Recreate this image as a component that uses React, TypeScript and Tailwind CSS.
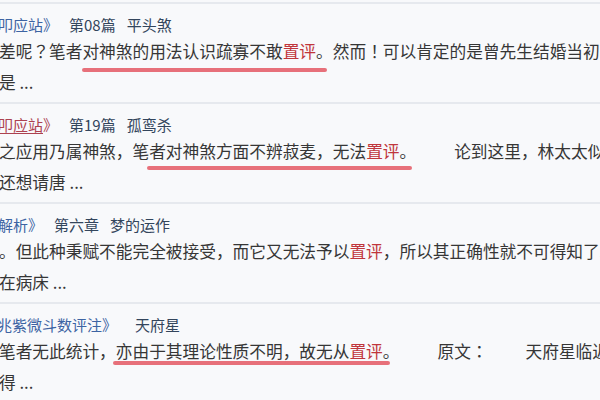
import React from 'react';

function Red({ children }: { children: React.ReactNode }) {
  return <span className="text-[#c0363c]">{children}</span>;
}

// full-width ？！： sit centred in the JP face, as in the screenshot
function P({ children }: { children: React.ReactNode }) {
  return <span className="font-['Noto_Sans_CJK_JP',sans-serif]">{children}</span>;
}

// hand-drawn marker stroke under a phrase
function Mark({ children, bar }: { children: React.ReactNode; bar: string }) {
  return (
    <span className="relative">
      {children}
      <span className={`absolute h-[4px] rounded-full bg-[#e4606c]/90 ${bar}`} />
    </span>
  );
}

function Gap() {
  return <span className="inline-block w-[38px]" />;
}

function Row({ title, line, tail }: { title: React.ReactNode; line: React.ReactNode; tail: React.ReactNode }) {
  return (
    <div className="h-[100px] border-t-2 border-[#e6e9ee] pt-[11px] overflow-hidden">
      {title}
      <div className="mt-[1px] -ml-[1px] text-[16.7px] leading-[31px] text-[#363636] whitespace-nowrap">{line}</div>
      <div className="-ml-[1px] text-[16.7px] leading-[31px] text-[#363636] whitespace-nowrap">{tail}</div>
    </div>
  );
}

export default function App() {
  return (
    <div className="w-[600px] h-[400px] overflow-hidden bg-[#f8f9fb] pt-[2px] font-['Noto_Sans_CJK_SC',sans-serif]">
      <Row
        title={
          <div className="flex gap-[11px] -ml-[2px] h-[20px] text-[15px] leading-[20px] text-[#33455c] whitespace-nowrap">
            <span className="text-[#3d64a3]">叩应站》</span>
            <span>第08篇</span>
            <span>平头煞</span>
          </div>
        }
        line={
          <>
            差呢<P>？</P>笔者
            <Mark bar="left-0 right-[6px] top-[29px]">
              对神煞的用法认识疏寡不敢<Red>置评</Red>。
            </Mark>
            然而<P>！</P>可以肯定的是曾先生结婚当初不
          </>
        }
        tail="是 ..."
      />
      <Row
        title={
          <div className="flex gap-[11px] -ml-[2px] h-[20px] text-[15px] leading-[20px] text-[#33455c] whitespace-nowrap">
            <span className="text-[#ad4250]">
              <span className="underline underline-offset-2">叩应站</span>》
            </span>
            <span>第19篇</span>
            <span>孤鸾杀</span>
          </div>
        }
        line={
          <>
            之应用乃属神煞，笔
            <Mark bar="-left-[2px] right-[4px] top-[27px]">
              者对神煞方面不辨菽麦，无法<Red>置评</Red>。
            </Mark>
            <Gap />
            论到这里，林太太似乎
          </>
        }
        tail="还想请唐 ..."
      />
      <Row
        title={
          <div className="flex gap-[11px] -ml-[2px] h-[20px] text-[15px] leading-[20px] text-[#33455c] whitespace-nowrap">
            <span className="text-[#3d64a3]">解析》</span>
            <span>第六章</span>
            <span>梦的运作</span>
          </div>
        }
        line={
          <>
            。但此种秉赋不能完全被接受，而它又无法予以<Red>置评</Red>，所以其正确性就不可得知了。
          </>
        }
        tail="在病床 ..."
      />
      <Row
        title={
          <div className="flex gap-[18px] -ml-[3px] h-[20px] text-[15px] leading-[20px] text-[#33455c] whitespace-nowrap">
            <span className="text-[#3d64a3]">兆紫微斗数评注》</span>
            <span>天府星</span>
          </div>
        }
        line={
          <>
            笔者无此统计，
            <Mark bar="-left-[3px] right-[10px] top-[22px]">
              亦由于其理论性质不明，故无从<Red>置评</Red>。
            </Mark>
            <Gap />
            原文<P>：</P>
            <Gap />
            天府星临近
          </>
        }
        tail="得 ..."
      />
    </div>
  );
}
